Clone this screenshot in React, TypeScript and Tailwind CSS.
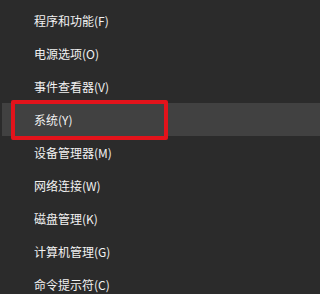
import React from "react"

const items = [
  "程序和功能(F)",
  "电源选项(O)",
  "事件查看器(V)",
  "系统(Y)",
  "设备管理器(M)",
  "网络连接(W)",
  "磁盘管理(K)",
  "计算机管理(G)",
  "命令提示符(C)",
]

export default function App() {
  return (
    <div
      className="h-screen w-full overflow-hidden bg-[#2b2b2b] pt-[4px] text-[12px] text-[#f2f2f2]"
      style={{ fontFamily: '"Noto Sans CJK SC", "Liberation Sans", sans-serif' }}
    >
      {items.map((label, i) => {
        const active = label === "系统(Y)"
        return (
          <div
            key={i}
            className={
              active
                ? "relative ml-[2px] flex h-[33px] items-center bg-[#414141] pl-[32px]"
                : "flex h-[33px] items-center pl-[34px]"
            }
          >
            {label}
            {active && (
              <div className="absolute left-[9px] top-[-3px] h-[40px] w-[157px] rounded-[2px] border-[4px] border-[#e3131b]" />
            )}
          </div>
        )
      })}
    </div>
  )
}
